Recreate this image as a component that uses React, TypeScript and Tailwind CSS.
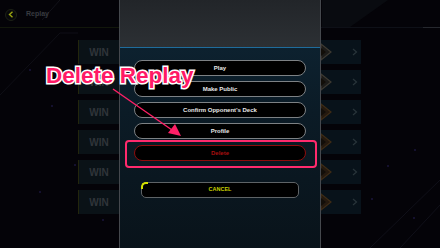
import React from "react";

const rows = [0, 1, 2, 3, 4, 5];

function LeftRow() {
  return (
    <div className="h-[24px] w-[41px] flex items-center justify-center bg-[#0a1217] border-l border-[#23260c]">
      <span className="text-[10px] font-bold text-[#30353a] [font-family:'Liberation_Sans',Arial,sans-serif]">WIN</span>
    </div>
  );
}

function RightRow({ i }: { i: number }) {
  return (
    <div className="h-[24px] w-[40px] flex items-center justify-between bg-[#08121a] pr-[3px]">
      <svg width="12" height="20" viewBox="0 0 12 20">
        <path d="M0 2 L10 10 L0 18 Z" fill={i < 2 ? "#1c1b19" : "#24190f"} stroke={i < 2 ? "#3e3a32" : "#3f2c16"} strokeWidth="1.2" />
        <path d="M0 6 L5 10 L0 14 Z" fill="#120e09" />
      </svg>
      <svg width="6" height="8" viewBox="0 0 6 8">
        <path d="M1 1 L4.5 4 L1 7" fill="none" stroke="#29343a" strokeWidth="1.2" />
      </svg>
    </div>
  );
}

function MenuButton({ label }: { label: string }) {
  return (
    <div className="h-[16px] w-[172px] rounded-full border-[1.5px] border-[#7d8184] bg-black flex items-center justify-center">
      <span className="text-[6px] font-bold text-[#e8e8e8] leading-none [font-family:'Liberation_Sans',Arial,sans-serif]">{label}</span>
    </div>
  );
}

export default function App() {
  return (
    <div className="relative w-[440px] h-[248px] overflow-hidden bg-[#040308] [font-family:'Liberation_Sans',Arial,sans-serif]">
      {/* background decor */}
      <svg className="absolute inset-0" width="440" height="248" viewBox="0 0 440 248">
        <path d="M322 0 L388 0 L350 27 L322 27 Z" fill="#090b10" />
        <line x1="0" y1="27.5" x2="119" y2="27.5" stroke="#12170b" strokeWidth="1" />
        <line x1="321" y1="27.5" x2="440" y2="27.5" stroke="#0e1017" strokeWidth="1" />
        <line x1="423" y1="27.5" x2="440" y2="27.5" stroke="#26282e" strokeWidth="1" />
        <line x1="60" y1="0" x2="42" y2="20" stroke="#121219" strokeWidth="1" />
        <line x1="60" y1="33" x2="0" y2="95" stroke="#0f0f16" strokeWidth="1" />
        <line x1="60" y1="33" x2="78" y2="33" stroke="#0f0f16" strokeWidth="1" />
        <line x1="440" y1="180" x2="370" y2="248" stroke="#101019" strokeWidth="1" />
        <line x1="440" y1="205" x2="400" y2="248" stroke="#101019" strokeWidth="1" />
        <circle cx="30" cy="70" r="0.8" fill="#2a2460" />
        <circle cx="75" cy="165" r="0.8" fill="#2a2460" />
        <circle cx="40" cy="192" r="0.8" fill="#2a2460" />
        <circle cx="52" cy="106" r="0.8" fill="#2a2460" />
        <circle cx="103" cy="220" r="0.8" fill="#2a2460" />
        <circle cx="415" cy="150" r="0.8" fill="#2a2460" />
        <circle cx="388" cy="166" r="0.8" fill="#2a2460" />
        <circle cx="372" cy="199" r="0.8" fill="#2a2460" />
        <circle cx="414" cy="218" r="0.8" fill="#2a2460" />
      </svg>

      <div className="relative flex h-full">
        {/* left area */}
        <div className="w-[119px] h-full flex flex-col">
          <div className="h-[30px] flex items-center pl-[5px] gap-[4px] pb-[1px]">
            <div className="w-[12px] h-[12px] rounded-full border border-[#1c2016] bg-[#07080a] flex items-center justify-center">
              <svg width="6" height="7" viewBox="0 0 6 7">
                <path d="M4.5 0.8 L1.5 3.5 L4.5 6.2" fill="none" stroke="#9aa410" strokeWidth="1.4" />
              </svg>
            </div>
            <span className="ml-[5px] text-[7px] font-bold text-[#383b40]">Replay</span>
          </div>
          <div className="mt-[10px] ml-[78px] flex flex-col gap-[6px]">
            {rows.map((r) => (
              <LeftRow key={r} />
            ))}
          </div>
        </div>

        {/* modal panel */}
        <div className="w-[202px] h-full flex flex-col border-x border-[#45484d] bg-[linear-gradient(180deg,#0e2636_0%,#0b1b26_45%,#09131a_100%)]">
          <div className="h-[48px] shrink-0 bg-[linear-gradient(180deg,#222529,#2c3034)] border-b border-[#1f6c9c]" />
          <div className="flex flex-col items-center pt-[12px] gap-[5px]">
            <MenuButton label="Play" />
            <MenuButton label="Make Public" />
            <MenuButton label="Confirm Opponent’s Deck" />
            <MenuButton label="Profile" />
            <div className="mt-[1px] h-[16px] w-[172px] rounded-full border-[1.5px] border-[#8e0c0c] bg-black flex items-center justify-center">
              <span className="text-[6px] font-bold text-[#a80f0f] leading-none">Delete</span>
            </div>
            <div className="relative mt-[16px] h-[16px] w-[158px] rounded-[5px] border-[1.5px] border-[#5e6366] bg-black flex items-center justify-center">
              <div className="absolute -left-[1.5px] -top-[1.5px] w-[7px] h-[7px] rounded-tl-[5px] border-l-[2px] border-t-[2px] border-[#d4e000]" />
              <span className="text-[5.5px] font-bold text-[#c8d200] leading-none">CANCEL</span>
            </div>
          </div>
        </div>

        {/* right area */}
        <div className="flex-1 h-full flex flex-col">
          <div className="mt-[40px] flex flex-col gap-[6px]">
            {rows.map((r) => (
              <RightRow key={r} i={r} />
            ))}
          </div>
        </div>
      </div>

      {/* highlight box */}
      <div className="absolute left-[125px] top-[140px] w-[192px] h-[28px] rounded-[4px] border-2 border-[#ff2a6d]" />

      {/* arrow */}
      <svg className="absolute inset-0 pointer-events-none" width="440" height="248" viewBox="0 0 440 248">
        <line x1="113" y1="89" x2="172" y2="130" stroke="#ff1f66" strokeWidth="1.4" />
        <path d="M181 136 L168 133 L175 124 Z" fill="#ff1f66" />
      </svg>

      {/* annotation text */}
      <div className="absolute left-[46px] top-[65px] text-[22.5px] font-bold leading-none text-[#ff1a66] [-webkit-text-stroke:3px_white] [paint-order:stroke_fill] whitespace-nowrap">
        Delete Replay
      </div>
    </div>
  );
}
